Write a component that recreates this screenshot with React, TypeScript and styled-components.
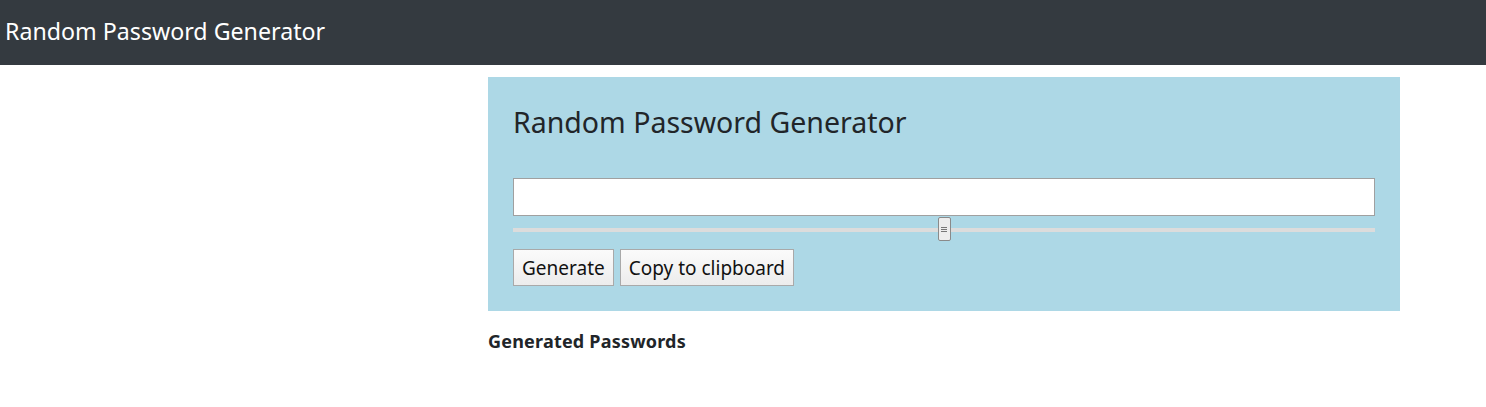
import React from "react";
import styled, { createGlobalStyle } from "styled-components";

const Global = createGlobalStyle`
  html, body { margin: 0; padding: 0; background: #fff; }
  body {
    font-family: "Noto Sans", "Open Sans", sans-serif;
    color: #212529;
  }
  * { box-sizing: border-box; }
`;

const NavBar = styled.nav`
  height: 65px;
  background: #343a40;
  display: flex;
  align-items: center;
  padding: 0 5px;
`;

const Brand = styled.span`
  color: #fff;
  font-size: 23.2px;
  line-height: 1;
  margin-top: -2px;
`;

const Main = styled.main`
  width: 912px;
  margin: 12px 0 0 488px;
`;

const Panel = styled.section`
  background: #add8e6;
  padding: 27px 25px 25px;
  display: flex;
  flex-direction: column;
`;

const Heading = styled.h3`
  margin: 0 0 38px;
  font-size: 28.5px;
  font-weight: 400;
  line-height: 36px;
`;

const TextBox = styled.input`
  height: 38px;
  width: 100%;
  border: 1px solid #a0a0a0;
  background: #fff;
  font-size: 18px;
  padding: 0 6px;
  margin: 0;
  outline: none;
`;

const Range = styled.input`
  -webkit-appearance: none;
  appearance: none;
  width: 100%;
  height: 26px;
  margin: 1px 0 6px;
  background: transparent;
  &::-webkit-slider-runnable-track {
    height: 4px;
    background: #dcdcdc;
  }
  &::-webkit-slider-thumb {
    -webkit-appearance: none;
    width: 13px;
    height: 24px;
    margin-top: -11px;
    border: 1px solid #8a8a8a;
    border-radius: 2px;
    background:
      linear-gradient(#777, #777) center 9px / 6px 1px no-repeat,
      linear-gradient(#777, #777) center 11px / 6px 1px no-repeat,
      linear-gradient(#777, #777) center 13px / 6px 1px no-repeat,
      #ededed;
  }
`;

const ButtonRow = styled.div`
  display: flex;
  gap: 6px;
`;

const Button = styled.button`
  height: 37px;
  padding: 0 8px;
  border: 1px solid #a9a9a9;
  border-radius: 0;
  background: linear-gradient(#fbfbfb, #ececec);
  font-family: inherit;
  font-size: 19px;
  color: #111;
`;

const SubHeading = styled.h5`
  margin: 18px 0 0;
  font-size: 18px;
  letter-spacing: 0.2px;
  font-weight: 700;
  line-height: 24px;
`;

export default function App() {
  return (
    <>
      <Global />
      <NavBar>
        <Brand>Random Password Generator</Brand>
      </NavBar>
      <Main>
        <Panel>
          <Heading>Random Password Generator</Heading>
          <TextBox type="text" readOnly value="" />
          <Range type="range" min={0} max={100} defaultValue={50} />
          <ButtonRow>
            <Button>Generate</Button>
            <Button>Copy to clipboard</Button>
          </ButtonRow>
        </Panel>
        <SubHeading>Generated Passwords</SubHeading>
      </Main>
    </>
  );
}
